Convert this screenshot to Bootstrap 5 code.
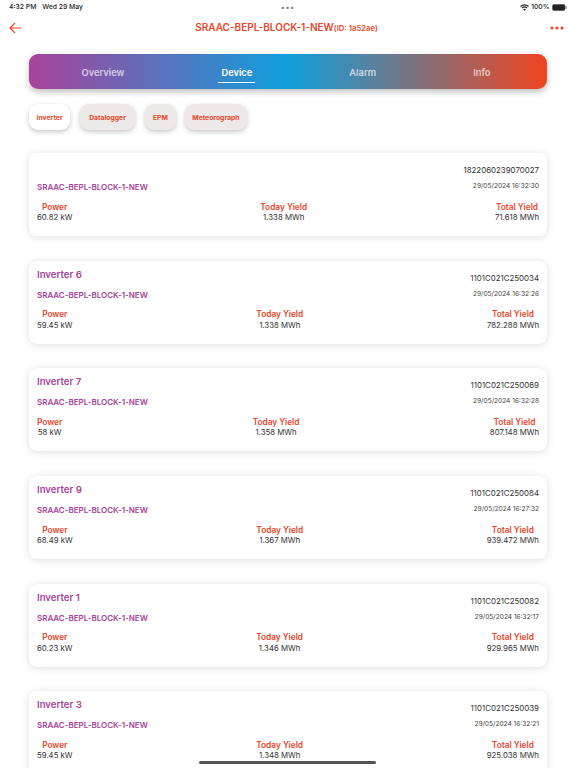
<!DOCTYPE html>
<html lang="en">
<head>
<meta charset="utf-8">
<title>Device</title>
<link href="https://cdn.jsdelivr.net/npm/bootstrap@5.3.0/dist/css/bootstrap.min.css" rel="stylesheet">
<style>
html,body{height:768px;overflow:hidden;background:#fff;}
body{font-family:Inter,"Liberation Sans",sans-serif;color:#333;position:relative;}
.status-strip{height:15px;padding:0 9px 0 9px;font-size:6.8px;font-weight:500;color:#222;}
.status-strip .tm{margin-right:6px;}
.status-right{gap:2.5px;}
.side-cell{flex:1 1 0;}
.multi-dots{font-size:7px;letter-spacing:1px;color:#777;line-height:1;}
.head-strip{height:25px;padding:0 12px 0 9px;}
.head-title{color:#e8472c;font-size:10px;font-weight:600;white-space:nowrap;}
.head-title span{font-size:7.7px;}
.tab-strip{height:35px;margin:14px 29px 0;padding:0 8px 0 4px;border-radius:9px;background:linear-gradient(90deg,#a8429a 0%,#0f9fdc 50%,#f0441f 100%);box-shadow:0 3px 6px rgba(0,0,0,.25);}
.tab-item{flex:1 1 auto;text-align:center;font-size:9.3px;line-height:12px;font-weight:600;color:rgba(255,255,255,.7);}
.tab-item b{font-weight:600;display:inline-block;padding:6px 3px 3px;border-bottom:1px solid transparent;}
.tab-item.on{color:#fff;}
.tab-item.on b{border-bottom-color:#fff;}
.chip-row{margin:15px 29px 0;gap:9.5px;}
.chip-item{height:26px;line-height:26px;padding:1px 8px 0;border-radius:9px;background:#ece9e8;color:#e8472c;font-size:6.8px;font-weight:700;box-shadow:0 2px 5px rgba(0,0,0,.22);}
.chip-item.on{background:#fff;padding:1px 7.5px 0;}
.chip-item.roomy{padding:1px 9.5px 0;}
.chip-item.tight{padding:1px 7px 0;}
.dev-card{margin:0 29px 24.7px;height:83px;border-radius:8px;background:#fff;box-shadow:0 1px 8px rgba(0,0,0,.13);padding:0 8px;}
.card-stack{margin-top:23px;}
.r1{height:26.5px;padding-top:7px;}
.dev-name{color:#a8429a;font-size:9.6px;font-weight:600;line-height:14px;}
.dev-serif{font-size:7.9px;color:#333;line-height:14px;margin-top:3px;}
.r2{height:15px;}
.plant{color:#a8429a;font-size:8px;font-weight:600;}
.stamp{font-size:6.6px;color:#444;}
.r3{margin-top:7px;font-size:7.8px;line-height:10.5px;}
.lab{color:#e8472c;font-size:8.3px;font-weight:600;}
.hbar{position:absolute;left:199px;bottom:4px;width:177px;height:3px;border-radius:2px;background:#555;}
</style>
</head>
<body>
<div class="status-strip d-flex align-items-center">
  <div class="side-cell"><span class="tm">4:32 PM</span>Wed 29 May</div>
  <div class="multi-dots">•••</div>
  <div class="side-cell status-right d-flex align-items-center justify-content-end">
    <svg width="9" height="7" viewBox="0 0 18 14" fill="none" stroke="#222" stroke-width="2.4"><path d="M1 5C5.5.6 12.5.6 17 5M4 8C6.8 5.4 11.2 5.4 14 8"/><path d="M9 13.5 6.2 10.6C7.8 9.2 10.2 9.2 11.8 10.6Z" fill="#222" stroke="none"/></svg>
    <span>100%</span>
    <svg width="15" height="7" viewBox="0 0 30 14"><rect x=".5" y=".5" width="26" height="13" rx="4" fill="#222" stroke="#888"/><rect x="27.5" y="4.5" width="2" height="5" rx="1" fill="#888"/></svg>
  </div>
</div>
<div class="head-strip d-flex align-items-center">
  <div class="side-cell d-flex"><svg width="13" height="12" viewBox="0 0 13 12" fill="none" stroke="#e8472c" stroke-width="1.2"><path d="M12.5 6H1M6 1 1 6l5 5"/></svg></div>
  <div class="head-title">SRAAC-BEPL-BLOCK-1-NEW<span>(ID: 1a52ae)</span></div>
  <div class="side-cell d-flex justify-content-end"><svg width="14" height="4" viewBox="0 0 14 4" fill="#e8472c"><circle cx="2" cy="2" r="1.6"/><circle cx="7" cy="2" r="1.6"/><circle cx="12" cy="2" r="1.6"/></svg></div>
</div>
<div class="tab-strip d-flex align-items-center">
  <div class="tab-item"><b>Overview</b></div>
  <div class="tab-item on"><b>Device</b></div>
  <div class="tab-item"><b>Alarm</b></div>
  <div class="tab-item"><b>Info</b></div>
</div>
<div class="chip-row d-flex">
  <div class="chip-item on">Inverter</div>
  <div class="chip-item roomy">Datalogger</div>
  <div class="chip-item">EPM</div>
  <div class="chip-item tight">Meteorograph</div>
</div>
<div class="card-stack" id="stack"></div>
<div class="hbar"></div>
<script>
var rows=[["","1822060239070027","29/05/2024 16:32:30","60.82 kW","1.338 MWh","71.618 MWh"],
["Inverter 6","1101C021C250034","29/05/2024 16:32:26","59.45 kW","1.338 MWh","782.288 MWh"],
["Inverter 7","1101C021C250069","29/05/2024 16:32:28","58 kW","1.358 MWh","807.148 MWh"],
["Inverter 9","1101C021C250084","29/05/2024 16:27:32","68.49 kW","1.367 MWh","939.472 MWh"],
["Inverter 1","1101C021C250082","29/05/2024 16:32:17","60.23 kW","1.346 MWh","929.965 MWh"],
["Inverter 3","1101C021C250039","29/05/2024 16:32:21","59.45 kW","1.348 MWh","925.038 MWh"]];
document.getElementById('stack').innerHTML=rows.map(function(r){return '<div class="dev-card">'+
'<div class="r1 d-flex justify-content-between"><div class="dev-name">'+r[0]+'</div><div class="dev-serif">'+r[1]+'</div></div>'+
'<div class="r2 d-flex justify-content-between align-items-center"><div class="plant">SRAAC-BEPL-BLOCK-1-NEW</div><div class="stamp">'+r[2]+'</div></div>'+
'<div class="r3 d-flex justify-content-between">'+
'<div class="text-center"><div class="lab">Power</div><div>'+r[3]+'</div></div>'+
'<div class="text-center"><div class="lab">Today Yield</div><div>'+r[4]+'</div></div>'+
'<div class="text-center"><div class="lab">Total Yield</div><div>'+r[5]+'</div></div>'+
'</div></div>';}).join('');
</script>
<script src="https://cdn.jsdelivr.net/npm/bootstrap@5.3.0/dist/js/bootstrap.bundle.min.js"></script>
</body>
</html>
